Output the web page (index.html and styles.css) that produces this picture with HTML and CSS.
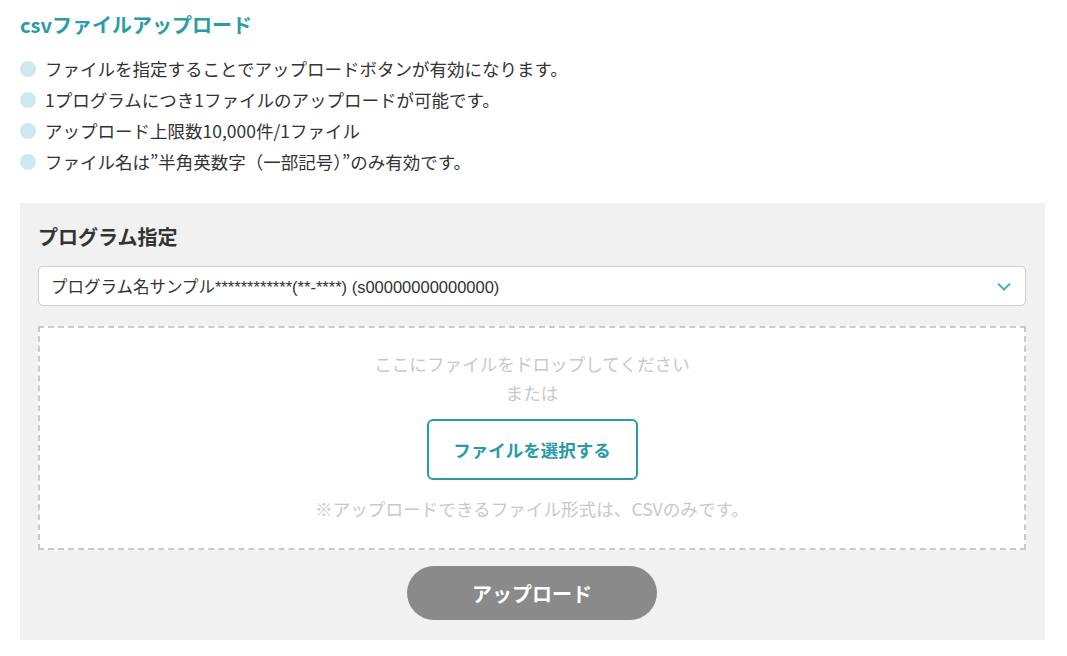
FILE: index.html
```html
<!DOCTYPE html>
<html lang="ja">
<head>
    <meta charset="UTF-8">
    <meta name="viewport" content="width=device-width, initial-scale=1.0">
    <title>csvファイルアップロード</title>
    <link rel="stylesheet" href="styles.css">
</head>
<body>
    <div class="upload-container">
        <h1 class="page-title">csvファイルアップロード</h1>

        <ul class="notes">
            <li>ファイルを指定することでアップロードボタンが有効になります。</li>
            <li>1プログラムにつき1ファイルのアップロードが可能です。</li>
            <li>アップロード上限数10,000件/1ファイル</li>
            <li>ファイル名は”半角英数字（一部記号）”のみ有効です。</li>
        </ul>

        <div class="upload-panel">
            <h2 class="panel-title">プログラム指定</h2>

            <div class="select-box">
                <span class="select-text">プログラム名サンプル************(**-****) (s00000000000000)</span>
                <svg class="select-arrow" width="14" height="9" viewBox="0 0 14 9">
                    <path d="M1 1.5 L7 7.5 L13 1.5" fill="none" stroke="#4ab0c1" stroke-width="2"/>
                </svg>
            </div>

            <div class="drop-zone">
                <p class="drop-text">ここにファイルをドロップしてください</p>
                <p class="drop-text">または</p>
                <button class="select-btn">ファイルを選択する</button>
                <p class="drop-note">※アップロードできるファイル形式は、CSVのみです。</p>
            </div>

            <div class="actions">
                <button class="upload-btn" disabled>アップロード</button>
            </div>
        </div>
    </div>
</body>
</html>
```

FILE: styles.css
```css
:root {
    --primary-color: #2a9ba6;
    --text-color: #333;
    --muted-color: #c8c8c8;
}

body {
    font-family: "Noto Sans CJK JP", "Liberation Sans", sans-serif;
    margin: 0;
    padding: 0;
    background-color: white;
    color: var(--text-color);
}

.upload-container {
    width: 1025px;
    padding: 11px 0 0 20px;
}

.page-title {
    margin: 0;
    font-size: 20px;
    line-height: 27px;
    font-weight: bold;
    color: var(--primary-color);
}

.notes {
    list-style: none;
    margin: 15px 0 0;
    padding: 0;
}

.notes li {
    display: flex;
    align-items: center;
    gap: 9px;
    font-size: 17.5px;
    line-height: 31px;
    height: 31px;
}

.notes li::before {
    content: "";
    width: 16px;
    height: 16px;
    border-radius: 50%;
    background: #cde9ef;
    flex-shrink: 0;
}

.upload-panel {
    margin-top: 26px;
    background: #f1f1f1;
    padding: 20px 19px 20px 18px;
}

.panel-title {
    margin: 0;
    font-size: 20px;
    line-height: 27px;
    font-weight: bold;
    color: #333;
}

.select-box {
    margin-top: 16px;
    height: 40px;
    box-sizing: border-box;
    display: flex;
    align-items: center;
    justify-content: space-between;
    padding: 0 14px 0 12px;
    background: white;
    border: 1px solid #cfcfcf;
    border-radius: 5px;
}

.select-text {
    font-family: "Liberation Sans", "Noto Sans CJK JP", sans-serif;
    font-size: 16.5px;
    color: #333;
}

.drop-zone {
    margin-top: 20px;
    height: 224px;
    box-sizing: border-box;
    background: white;
    border: 2px dashed #cacaca;
    display: flex;
    flex-direction: column;
    align-items: center;
    padding-top: 21px;
}

.drop-text,
.drop-note {
    margin: 0;
    font-size: 17.6px;
    line-height: 29px;
    color: var(--muted-color);
}

.select-btn {
    margin-top: 12px;
    width: 211px;
    height: 61px;
    background: white;
    border: 2px solid var(--primary-color);
    border-radius: 6px;
    font-family: inherit;
    font-size: 17.5px;
    font-weight: bold;
    color: var(--primary-color);
    cursor: pointer;
}

.drop-note {
    margin-top: 14px;
}

.actions {
    display: flex;
    justify-content: center;
    margin-top: 16px;
}

.upload-btn {
    width: 250px;
    height: 54px;
    border: none;
    border-radius: 27px;
    background: #8a8a8a;
    color: white;
    font-family: inherit;
    font-size: 20px;
    font-weight: bold;
}
```
